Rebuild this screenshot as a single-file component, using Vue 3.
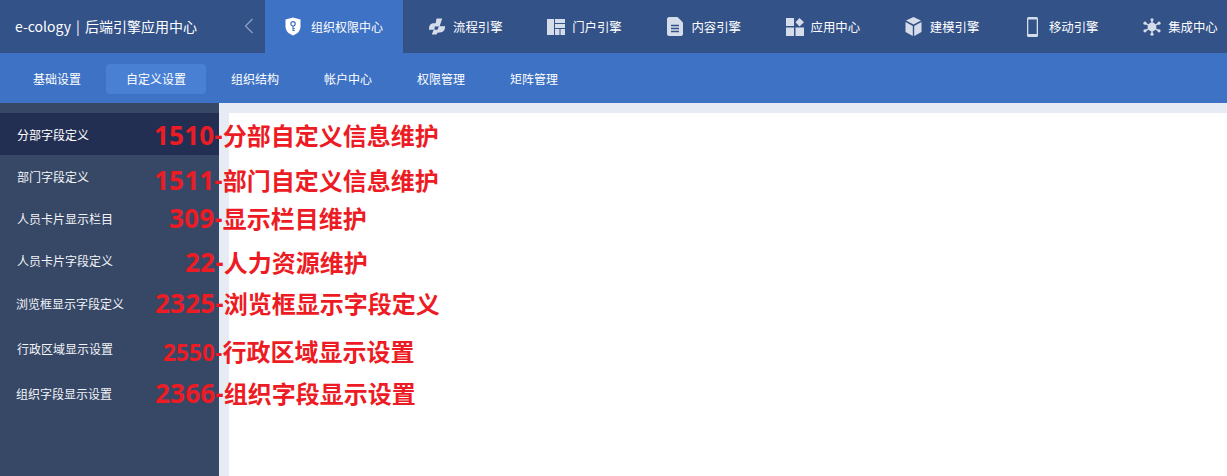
<script setup>
const topItems = [
  { label: '流程引擎', icon: 'flow' },
  { label: '门户引擎', icon: 'portal' },
  { label: '内容引擎', icon: 'doc' },
  { label: '应用中心', icon: 'apps' },
  { label: '建模引擎', icon: 'cube' },
  { label: '移动引擎', icon: 'phone' },
  { label: '集成中心', icon: 'hub' },
]
const subItems = ['基础设置', '自定义设置', '组织结构', '帐户中心', '权限管理', '矩阵管理']
const sideItems = ['分部字段定义', '部门字段定义', '人员卡片显示栏目', '人员卡片字段定义', '浏览框显示字段定义', '行政区域显示设置', '组织字段显示设置']
const notes = [
  { id: '1510', text: '分部自定义信息维护', left: 154, top: 119 },
  { id: '1511', text: '部门自定义信息维护', left: 154, top: 164 },
  { id: '309', text: '显示栏目维护', left: 169, top: 202 },
  { id: '22', text: '人力资源维护', left: 185, top: 246 },
  { id: '2325', text: '浏览框显示字段定义', left: 155, top: 287 },
  { id: '2550', text: '行政区域显示设置', left: 163, top: 335, small: true },
  { id: '2366', text: '组织字段显示设置', left: 155, top: 377 },
]
</script>

<template>
  <div class="page">
    <header class="top">
      <div class="brand">e-cology | 后端引擎应用中心</div>
      <svg class="chev" width="10" height="16" viewBox="0 0 10 16"><path d="M8.5 1 L1.5 8 L8.5 15" fill="none" stroke="#8ea3c6" stroke-width="1.2" /></svg>
      <div class="tab active">
        <svg class="ico" width="16" height="19" viewBox="0 0 16 19">
          <path d="M8 0.5 L15.5 2.5 V9.5 C15.5 14 12 17 8 18.5 C4 17 0.5 14 0.5 9.5 V2.5 Z" fill="#fff" />
          <circle cx="8" cy="6.8" r="2.2" fill="none" stroke="#3e72c4" stroke-width="1.2" />
          <path d="M8 9 V14 M8 11.5 H9.8 M8 13.5 H9.8" stroke="#3e72c4" stroke-width="1.1" fill="none" />
        </svg>
        <span>组织权限中心</span>
      </div>
      <div v-for="item in topItems" :key="item.label" class="tab">
        <span class="slot">
          <svg v-if="item.icon === 'flow'" width="19" height="19" viewBox="0 0 19 19" fill="#d5dcea">
            <path d="M9 1 H15 L13 7 C12.5 9 11 9.5 9 9.5 H7 V13 H1 C1 9 2 6.5 5 6 H8 Z" />
            <path d="M12 8 C12.5 9.5 14 9.5 18 9 C18 13 17 15 14 15.5 L10 16 L9 18 H4 L6 13 H10 Z" />
          </svg>
          <svg v-else-if="item.icon === 'portal'" width="18" height="16" viewBox="0 0 18 16" fill="#d5dcea">
            <path d="M0 0 H7 V16 H0 Z M8 0 H18 V4 H8 Z M8 5 H18 V9 H8 Z M8 10 H12.5 V16 H8 Z M13.5 10 H18 V16 H13.5 Z" />
          </svg>
          <svg v-else-if="item.icon === 'doc'" width="16" height="19" viewBox="0 0 16 19">
            <path d="M2 0 H10.5 L16 5.5 V17 C16 18 15 19 14 19 H2 C1 19 0 18 0 17 V2 C0 1 1 0 2 0 Z" fill="#d5dcea" />
            <path d="M4 8.5 H12 M4 11.5 H12 M4 14.5 H12" stroke="#335288" stroke-width="1.4" />
          </svg>
          <svg v-else-if="item.icon === 'apps'" width="18" height="18" viewBox="0 0 18 18" fill="#d5dcea">
            <path d="M0 0 H8 V8 H0 Z M0 9.5 H8 V18 H0 Z M9.5 9.5 H18 V18 H9.5 Z M13.5 0 L18 4.2 L13.5 8.4 L9.5 4.2 Z" />
          </svg>
          <svg v-else-if="item.icon === 'cube'" width="17" height="19" viewBox="0 0 17 19" fill="#d5dcea">
            <path d="M8.5 0 L16 3.5 L8.5 7.5 L1 3.5 Z M0.5 5 L7.8 9 V19 L0.5 15 Z M16.5 5 L9.2 9 V19 L16.5 15 Z" />
          </svg>
          <svg v-else-if="item.icon === 'phone'" width="11" height="20" viewBox="0 0 11 20">
            <rect x="0" y="0" width="11" height="20" rx="1.5" fill="#d5dcea" />
            <rect x="1.3" y="2.5" width="8.4" height="14.5" fill="#335288" />
          </svg>
          <svg v-else width="18" height="18" viewBox="0 0 18 18" fill="#d5dcea">
            <circle cx="9" cy="9" r="4.4" />
            <circle cx="9" cy="1.8" r="1.6" /><circle cx="9" cy="16.2" r="1.6" />
            <circle cx="2" cy="5.2" r="1.6" /><circle cx="16" cy="5.2" r="1.6" />
            <circle cx="2" cy="12.8" r="1.6" /><circle cx="16" cy="12.8" r="1.6" />
            <path d="M9 2 V16 M2 5.2 L16 12.8 M16 5.2 L2 12.8" stroke="#d5dcea" stroke-width="1.4" />
          </svg>
        </span>
        <span>{{ item.label }}</span>
      </div>
    </header>

    <nav class="sub">
      <div v-for="(s, i) in subItems" :key="s" class="sub-item" :class="{ on: i === 1 }">{{ s }}</div>
    </nav>

    <div class="body">
      <aside class="side">
        <div v-for="(s, i) in sideItems" :key="s" class="side-item" :class="{ on: i === 0 }">{{ s }}</div>
      </aside>
      <main class="content"></main>
      <div v-for="n in notes" :key="n.id" class="note" :style="{ left: n.left + 'px', top: n.top + 'px' }">
        <span class="num" :class="{ small: n.small }">{{ n.id }}-</span><span>{{ n.text }}</span>
      </div>
    </div>
  </div>
</template>

<style>
html, body { margin: 0; padding: 0; overflow: hidden; background: #fff; }
</style>

<style scoped>
.page {
  width: 1227px;
  height: 476px;
  overflow: hidden;
  display: flex;
  flex-direction: column;
  font-family: "Noto Sans CJK SC", "Noto Sans", sans-serif;
  font-size: 12px;
  color: #fff;
  position: relative;
}
.top {
  height: 53px;
  flex: none;
  background: #335288;
  display: flex;
  align-items: stretch;
}
.brand {
  width: 239px;
  flex: none;
  box-sizing: border-box;
  padding-left: 15px;
  line-height: 53px;
  font-size: 14px;
  word-spacing: 2px;
  white-space: nowrap;
}
.chev {
  flex: none;
  width: 10px;
  margin: 18px 11px 0 5px;
  align-self: flex-start;
}
.tab {
  flex: 0 0 119.2px;
  box-sizing: border-box;
  padding-left: 25px;
  display: flex;
  align-items: center;
  gap: 7px;
  white-space: nowrap;
  font-size: 12.4px;
}
.tab.active {
  flex: 0 0 138px;
  padding-left: 20px;
  background: #3e72c4;
  font-size: 12px;
  gap: 10px;
}
.slot {
  width: 18px;
  height: 20px;
  display: flex;
  align-items: center;
  justify-content: center;
  flex: none;
}
.ico { flex: none; }
.sub {
  height: 50px;
  flex: none;
  background: #3e72c4;
  display: flex;
  align-items: center;
  gap: 5px;
  padding-left: 13px;
  padding-top: 1px;
  box-sizing: border-box;
}
.sub-item {
  height: 30px;
  line-height: 30px;
  padding: 0 20px;
  border-radius: 4px;
}
.sub-item.on { background: #4a80d4; }
.body {
  flex: 1;
  display: flex;
  background: #e6ebf4;
}
.side {
  width: 219px;
  flex: none;
  background: #374766;
  padding-top: 10px;
  box-sizing: border-box;
}
.side-item {
  height: 42px;
  line-height: 43px;
  padding-left: 17px;
  color: #f2f4f8;
  white-space: nowrap;
}
.side-item.on { background: #222f52; color: #fff; }
.side-item:nth-child(5) { height: 44px; line-height: 44px; padding-left: 16px; margin-top: 1px; }
.side-item:nth-child(6) { height: 46px; line-height: 46px; }
.side-item:nth-child(7) { height: 44px; line-height: 44px; padding-left: 16px; }
.content {
  flex: 1;
  margin: 10px 0 0 10px;
  background: #fff;
}
.note {
  position: absolute;
  font-weight: 700;
  font-size: 24px;
  line-height: 32px;
  color: #ed1c24;
  white-space: nowrap;
}
.num {
  font-family: "Noto Sans", sans-serif;
  font-size: 26px;
  letter-spacing: 0.2px;
}
.num.small { font-size: 22.4px; }
</style>
